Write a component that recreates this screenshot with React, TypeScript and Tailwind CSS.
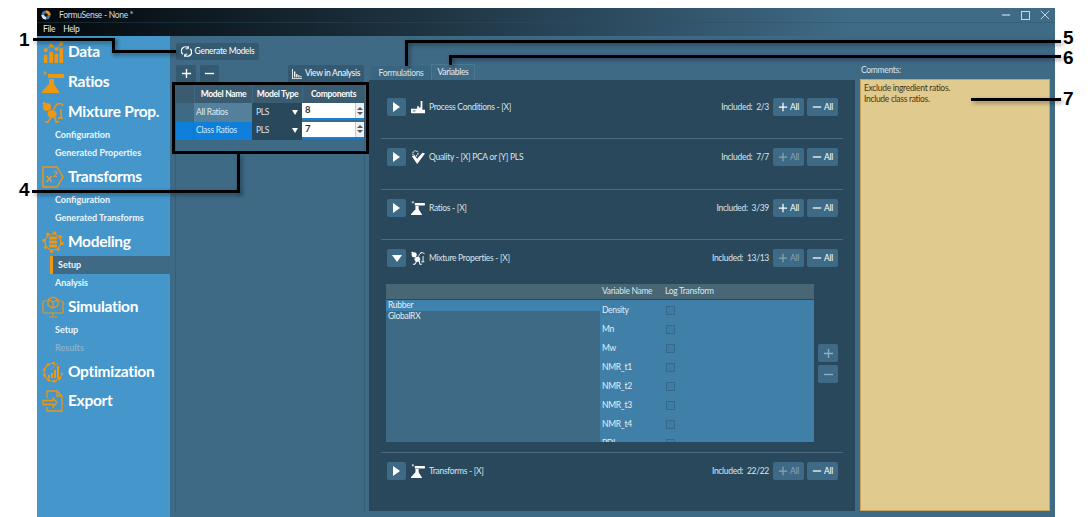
import React from "react";

type IconProps = { className?: string };

const DataIcon = ({ className }: IconProps) => (
  <svg viewBox="0 0 22 24" className={className} fill="currentColor">
    <rect x="1" y="15" width="4" height="9" />
    <rect x="7" y="12" width="4" height="12" />
    <rect x="12.5" y="14" width="4" height="10" />
    <rect x="18" y="8" width="4" height="16" />
    <circle cx="3" cy="10" r="2" />
    <circle cx="9" cy="5" r="2" />
    <circle cx="15" cy="9" r="2" />
    <circle cx="20" cy="3" r="2" />
    <path d="M3 10 9 5l6 4 5-6" fill="none" stroke="currentColor" strokeWidth="1" />
  </svg>
);

const FlaskIcon = ({ className }: IconProps) => (
  <svg viewBox="0 0 22 22" className={className} fill="currentColor">
    <path d="M6 3h15a1 1 0 0 1 1 1v2a1 1 0 0 1-1 1H6z" />
    <path d="M3 0v4M1 2h4" stroke="currentColor" strokeWidth="1" fill="none" />
    <path d="M7 8h5v5l4.5 7a1 1 0 0 1-1 2H1.5a1 1 0 0 1-1-2L7 13z" />
  </svg>
);

const MixtureIcon = ({ className }: IconProps) => (
  <svg viewBox="0 0 22 22" className={className} fill="currentColor">
    <circle cx="5" cy="6" r="4" />
    <circle cx="2" cy="2.5" r="1.5" />
    <ellipse cx="10" cy="13" rx="4.5" ry="4" />
    <path d="M9 16l-3 5h-3M13 16l1 5h3" fill="none" stroke="currentColor" strokeWidth="1.6" />
    <path d="M12 9c1-7 8-8 9-4M14 4l3-2M19 8v9M16 17h5" fill="none" stroke="currentColor" strokeWidth="1.4" />
  </svg>
);

const TransformIcon = ({ className }: IconProps) => (
  <svg viewBox="0 0 22 22" className={className}>
    <path d="M1 1h14l6 10-6 10H1z" fill="none" stroke="currentColor" strokeWidth="1.4" />
    <text x="3.5" y="16" fontSize="12" fontWeight="bold" letterSpacing="0" fontFamily="Lato, sans-serif" fill="currentColor">x</text>
    <text x="10.5" y="10.5" fontSize="8" fontWeight="bold" letterSpacing="0" fontFamily="Lato, sans-serif" fill="currentColor">2</text>
  </svg>
);

const ModelingIcon = ({ className }: IconProps) => (
  <svg viewBox="0 0 22 22" className={className} fill="currentColor">
    <circle cx="11" cy="11" r="8" fill="none" stroke="currentColor" strokeWidth="1.2" />
    <circle cx="11" cy="11" r="9.5" fill="none" stroke="currentColor" strokeWidth="2.4" strokeDasharray="3 4.45" />
    <rect x="7" y="5.5" width="8" height="3" rx="1" />
    <rect x="7" y="9.5" width="8" height="3" rx="1" />
    <rect x="7" y="13.5" width="8" height="3" rx="1" />
  </svg>
);

const SimulationIcon = ({ className }: IconProps) => (
  <svg viewBox="0 0 22 22" className={className} fill="none" stroke="currentColor" strokeWidth="1.2">
    <path d="M5 5H2a1 1 0 0 0-1 1v10a1 1 0 0 0 1 1h18a1 1 0 0 0 1-1V6a1 1 0 0 0-1-1h-3" />
    <path d="M11 17v3M7 21h8" />
    <path d="M11 1l5 2.5v6L11 12l-5-2.5v-6zM6 3.5 11 6l5-2.5M11 6v6" />
  </svg>
);

const OptimizationIcon = ({ className }: IconProps) => (
  <svg viewBox="0 0 22 22" className={className} fill="currentColor">
    <path d="M13 2.5A9 9 0 1 0 20 12" fill="none" stroke="currentColor" strokeWidth="1.1" />
    <path d="M13 2.5A9 9 0 1 0 20 12" fill="none" stroke="currentColor" strokeWidth="2.6" strokeDasharray="2.5 3.5" />
    <rect x="6" y="14" width="2" height="3" />
    <rect x="9" y="12" width="2" height="5" />
    <rect x="12" y="9" width="2" height="8" />
    <rect x="15" y="5" width="2" height="12" />
    <path d="M8 9l8-7" fill="none" stroke="currentColor" strokeWidth="0.8" />
  </svg>
);

const ExportIcon = ({ className }: IconProps) => (
  <svg viewBox="0 0 22 22" className={className} fill="none" stroke="currentColor" strokeWidth="1.3">
    <path d="M5 8V1h10l5 5v15H5v-4" />
    <path d="M15 1v5h5" />
    <path d="M1 10.5h10V8l4 4.5-4 4.5v-2.5H1z" />
  </svg>
);

const FactoryIcon = ({ className }: IconProps) => (
  <svg viewBox="0 0 16 16" className={className} fill="currentColor">
    <path d="M11 1h2v10h3v4H1a1 1 0 0 1-1-1v-4h7V7h2v2l2-1z" />
    <rect x="2" y="12" width="3" height="1" fill="#2a485c" />
  </svg>
);

const QualityIcon = ({ className }: IconProps) => (
  <svg viewBox="0 0 16 16" className={className} fill="currentColor">
    <circle cx="5" cy="4" r="3" fill="none" stroke="currentColor" strokeWidth="1.2" strokeDasharray="1.5 1" />
    <path d="M1 7l3-1 3 4 6-7 3 1-9 12z" />
  </svg>
);

const PlusGlyph = ({ className }: IconProps) => (
  <svg viewBox="0 0 12 12" className={className} fill="none" stroke="currentColor" strokeWidth="1.5">
    <path d="M6 1v10M1 6h10" />
  </svg>
);

const MinusGlyph = ({ className }: IconProps) => (
  <svg viewBox="0 0 12 12" className={className} fill="none" stroke="currentColor" strokeWidth="1.5">
    <path d="M1 6h10" />
  </svg>
);

const NavHead = ({ label, icon, h }: { label: string; icon: React.ReactNode; h: string }) => (
  <div className={`flex items-center pl-[5px] text-white ${h}`}>
    <span className="w-[22px] h-[22px] shrink-0 text-[#f0960f]">{icon}</span>
    <span className="ml-[4px] text-[15.5px] tracking-[-0.3px] font-bold leading-none">{label}</span>
  </div>
);

const NavSub = ({ label, muted }: { label: string; muted?: boolean }) => (
  <div className={`h-[18px] flex items-center pl-[18px] text-[9px] tracking-normal font-bold ${muted ? "text-[#8fb0c6]" : "text-[#eef6fb]"}`}>
    {label}
  </div>
);

const Sidebar = () => (
  <aside className="w-[133px] shrink-0 bg-[#4496cb] pt-px">
    <NavHead label="Data" h="h-[30px]" icon={<DataIcon className="w-full h-full" />} />
    <NavHead label="Ratios" h="h-[30px]" icon={<FlaskIcon className="w-full h-full" />} />
    <NavHead label="Mixture Prop." h="h-[29px]" icon={<MixtureIcon className="w-full h-full" />} />
    <NavSub label="Configuration" />
    <NavSub label="Generated Properties" />
    <NavHead label="Transforms" h="h-[29px]" icon={<TransformIcon className="w-full h-full" />} />
    <NavSub label="Configuration" />
    <NavSub label="Generated Transforms" />
    <NavHead label="Modeling" h="h-[29px]" icon={<ModelingIcon className="w-full h-full" />} />
    <div className="h-[18px] flex items-center bg-[#3e6a86] ml-[13px]">
      <span className="w-[3px] h-full bg-[#f0960f]" />
      <span className="ml-[5px] text-[9px] tracking-normal font-bold text-[#eef6fb]">Setup</span>
    </div>
    <NavSub label="Analysis" />
    <NavHead label="Simulation" h="h-[29px]" icon={<SimulationIcon className="w-full h-full" />} />
    <NavSub label="Setup" />
    <NavSub label="Results" muted />
    <NavHead label="Optimization" h="h-[29px]" icon={<OptimizationIcon className="w-full h-full" />} />
    <NavHead label="Export" h="h-[30px]" icon={<ExportIcon className="w-full h-full" />} />
  </aside>
);

const NumberField = ({ value }: { value: string }) => (
  <div className="flex-1 h-[17px] bg-white flex items-center border-b-2 border-[#1a7fd0]">
    <span className="flex-1 pl-[3px] text-[9.5px] font-bold text-[#333]">{value}</span>
    <span className="w-[9px] h-full bg-[#eef1f3] border-l border-[#c4ccd2] flex flex-col items-center justify-center gap-[2px]">
      <span className="w-0 h-0 border-x-[3px] border-x-transparent border-b-[3px] border-b-[#555]" />
      <span className="w-0 h-0 border-x-[3px] border-x-transparent border-t-[3px] border-t-[#555]" />
    </span>
  </div>
);

const ModelRow = ({ name, value, selected }: { name: string; value: string; selected?: boolean }) => (
  <div className="h-[18.5px] flex items-stretch">
    <div className={`w-[18px] border-r border-[#3e6a86] ${selected ? "bg-[#0f7fdc]" : "bg-[#3e6a86]"}`} />
    <div className={`w-[58px] flex items-center pl-[2px] ${selected ? "bg-[#0f7fdc] text-[#cfe9fb]" : "bg-[#54809b] text-[#e2edf3]"}`}>
      {name}
    </div>
    <div className="w-[50px] bg-[#2a485c] flex items-center justify-between px-[4px] text-[#d9e5ec]">
      PLS
      <span className="w-0 h-0 border-x-[3.5px] border-x-transparent border-t-[5px] border-t-white" />
    </div>
    <NumberField value={value} />
  </div>
);

const HeadCell = ({ label, w }: { label: string; w: string }) => (
  <div className={`${w} flex items-center justify-center border-l border-[#3e6a86] font-bold text-white`}>{label}</div>
);

const ActionButton = ({ children, className }: { children: React.ReactNode; className: string }) => (
  <button className={`h-[17px] rounded-[2px] bg-[#345a72] flex items-center justify-center text-white ${className}`}>{children}</button>
);

const ModelsPanel = () => (
  <section className="w-[199px] shrink-0 pl-[5px] pt-[7px] flex flex-col">
    <ActionButton className="w-[83px] ml-px text-[#e2edf3] gap-[3px]">
      <svg viewBox="0 0 12 12" className="w-[11px] h-[11px]" fill="none" stroke="currentColor" strokeWidth="1.5">
        <path d="M2 9A4.5 4.5 0 0 1 8 2M10 3a4.5 4.5 0 0 1-6 7" />
        <path d="M8 0v3h-3M4 12V9h3" strokeWidth="1" />
      </svg>
      Generate Models
    </ActionButton>
    <div className="flex items-center mt-[5px] pl-px w-[189px]">
      <ActionButton className="w-[20px]"><PlusGlyph className="w-[11px] h-[11px]" /></ActionButton>
      <ActionButton className="w-[19px] ml-[4px]"><MinusGlyph className="w-[11px] h-[11px]" /></ActionButton>
      <ActionButton className="w-[76px] ml-auto text-[#e2edf3] gap-[3px]">
        <svg viewBox="0 0 12 12" className="w-[10px] h-[10px]" fill="currentColor">
          <path d="M0 0h1v11h11v1H0z" />
          <rect x="2.5" y="3" width="1.5" height="7" />
          <rect x="5" y="6" width="1.5" height="4" />
          <rect x="7.5" y="7.5" width="1.5" height="2.5" />
          <rect x="10" y="8.5" width="1.5" height="1.5" />
        </svg>
        View in Analysis
      </ActionButton>
    </div>
    <div className="flex-1 mt-[3px] mb-[4px] w-[190px] border-x border-[#375f78] flex flex-col">
      <div className="h-[18px] flex bg-[#3b5c70]">
        <div className="w-[18px]" />
        <HeadCell label="Model Name" w="w-[58px]" />
        <HeadCell label="Model Type" w="w-[50px]" />
        <HeadCell label="Components" w="flex-1" />
      </div>
      <ModelRow name="All Ratios" value="8" />
      <ModelRow name="Class Ratios" value="7" selected />
    </div>
  </section>
);

const RowHead = ({
  icon,
  title,
  count,
  open,
  plusDisabled,
  className,
}: {
  icon: React.ReactNode;
  title: string;
  count: string;
  open?: boolean;
  plusDisabled?: boolean;
  className?: string;
}) => (
  <div className={`flex items-center h-[18px] pl-[18px] pr-[17px] ${className ?? ""}`}>
    <button className="w-[19px] h-[18px] rounded-[2px] bg-[#3e6a86] flex items-center justify-center">
      {open ? (
        <span className="w-0 h-0 border-x-[5.5px] border-x-transparent border-t-[7px] border-t-white" />
      ) : (
        <span className="w-0 h-0 border-y-[5px] border-y-transparent border-l-[7px] border-l-white" />
      )}
    </button>
    <span className="ml-[5px] w-[14px] h-[14px] text-white">{icon}</span>
    <span className="ml-[4px] text-[#d9e5ec]">{title}</span>
    <span className="ml-auto text-[#d9e5ec] whitespace-pre">{`Included:  ${count}`}</span>
    <button className={`ml-[4px] w-[31px] h-[18px] rounded-[2px] bg-[#3e6a86] flex items-center justify-center gap-[2px] ${plusDisabled ? "text-[#8aa3b3]" : "text-white"}`}>
      <PlusGlyph className="w-[10px] h-[10px]" />All
    </button>
    <button className="ml-[3px] w-[31px] h-[18px] rounded-[2px] bg-[#3e6a86] flex items-center justify-center gap-[2px] text-white">
      <MinusGlyph className="w-[10px] h-[10px]" />All
    </button>
  </div>
);

const Divider = ({ className }: { className: string }) => <div className={`mx-[12px] h-px bg-[#4d6b80] ${className}`} />;

const vars = ["Density", "Mn", "Mw", "NMR_t1", "NMR_t2", "NMR_t3", "NMR_t4", "PDI"];

const VariableTable = () => (
  <div className="mt-[17px] ml-[17px] flex">
    <div className="w-[428px] h-[158px] flex flex-col overflow-hidden">
      <div className="h-[16px] shrink-0 flex bg-[#486674] border-b border-[#2a485c] text-[#d9e5ec]">
        <div className="w-[214px]" />
        <div className="w-[62px] border-r border-[#3e6a86] pl-[2px] leading-[15px]">Variable Name</div>
        <div className="pl-[3px] leading-[15px]">Log Transform</div>
      </div>
      <div className="flex-1 min-h-0 flex">
        <div className="w-[214px] bg-[#3e6a86] text-[#e2edf3] leading-[11px]">
          <div className="bg-[#3f82ae] pl-[2px]">Rubber</div>
          <div className="pl-[2px]">GlobalRX</div>
        </div>
        <div className="flex-1 bg-[#4080a8] overflow-hidden pt-[1px]">
          {vars.map((v) => (
            <div key={v} className="h-[19px] flex items-center text-[#e2edf3]">
              <span className="w-[62px] pl-[2px]">{v}</span>
              <span className="ml-[4px] w-[9px] h-[9px] border border-[#36688a] bg-[#3f7ca3]" />
            </div>
          ))}
        </div>
      </div>
    </div>
    <div className="ml-[4px] pt-[60px] flex flex-col gap-[3px] text-[#8fadc0]">
      <button className="w-[20px] h-[18px] rounded-[2px] bg-[#3e6a86] flex items-center justify-center"><PlusGlyph className="w-[11px] h-[11px]" /></button>
      <button className="w-[20px] h-[18px] rounded-[2px] bg-[#3e6a86] flex items-center justify-center"><MinusGlyph className="w-[11px] h-[11px]" /></button>
    </div>
  </div>
);

const VariablesPanel = () => (
  <section className="w-[486px] shrink-0 flex flex-col mb-[6px]">
    <div className="h-[44px] shrink-0 flex items-end pl-[2px]">
      <div className="w-[60px] h-[14px] bg-[#3a6580] text-center leading-[14px] text-[#d9e5ec]">Formulations</div>
      <div className="w-[44px] h-[16px] bg-[#3e6a86] border-x border-t border-[#4a7792] text-center leading-[15px] text-[#e6eff5]">Variables</div>
    </div>
    <div className="flex-1 bg-[#2a485c] pt-[18px]">
      <RowHead icon={<FactoryIcon className="w-full h-full" />} title="Process Conditions - [X]" count="2/3" />
      <Divider className="mt-[22px]" />
      <RowHead className="mt-[9px]" plusDisabled icon={<QualityIcon className="w-full h-full" />} title="Quality - [X] PCA or [Y] PLS" count="7/7" />
      <Divider className="mt-[23px]" />
      <RowHead className="mt-[9px]" icon={<FlaskIcon className="w-full h-full" />} title="Ratios - [X]" count="3/39" />
      <Divider className="mt-[22px]" />
      <RowHead className="mt-[9px]" open plusDisabled icon={<MixtureIcon className="w-full h-full" />} title="Mixture Properties - [X]" count="13/13" />
      <VariableTable />
      <Divider className="mt-[10px]" />
      <RowHead className="mt-[9px]" plusDisabled icon={<FlaskIcon className="w-full h-full" />} title="Transforms - [X]" count="22/22" />
    </div>
  </section>
);

const CommentsPanel = () => (
  <section className="ml-[5px] w-[190px] shrink-0 flex flex-col mb-[6px]">
    <div className="h-[43px] shrink-0 flex items-end pb-[2px] pl-px text-[#d9e5ec]">Comments:</div>
    <div className="flex-1 bg-[#e0ca8e] border border-[#c7a55c] px-[3px] pt-[3px] leading-[11px] text-[#4a3413]">
      <div>Exclude ingredient ratios.</div>
      <div>Include class ratios.</div>
    </div>
  </section>
);

const Line = ({ className }: { className: string }) => (
  <div className={`absolute bg-black shadow-[2px_2px_4px_rgba(0,0,0,0.4)] ${className}`} />
);

const Num = ({ children, className }: { children: string; className: string }) => (
  <div className={`absolute font-['Liberation_Sans',sans-serif] font-bold text-[19px] tracking-normal leading-[14px] text-black ${className}`}>{children}</div>
);

export default function App() {
  return (
    <div className="relative w-[1092px] h-[517px] bg-white overflow-hidden whitespace-nowrap pt-[8px] pl-[37px] text-[8.5px] tracking-[-0.3px] font-['Lato','Noto_Sans',sans-serif]">
      <div className="w-[1018px] h-[509px] flex flex-col bg-[#3e6a86]">
        <header className="h-[28px] shrink-0 bg-gradient-to-r from-[#05090d] to-[#3f6b87] to-80% relative">
          <div className="h-[14px] flex items-center pl-[4px] text-[#d5dde2]">
            <svg viewBox="0 0 12 12" className="w-[10px] h-[10px]">
              <circle cx="6" cy="6" r="5.5" fill="#3d7fa8" />
              <path d="M6 .5A5.5 5.5 0 0 1 11.5 6H6z" fill="#f0960f" />
              <path d="M6 11.5A5.5 5.5 0 0 1 .5 6H6z" fill="#dfe6ea" />
              <circle cx="6" cy="6" r="2.2" fill="#111" />
            </svg>
            <span className="ml-[8px]">FormuSense - None *</span>
            <span className="ml-auto mr-[5px] flex items-center gap-[10px] text-[#c7d6df]">
              <MinusGlyph className="w-[10px] h-[10px]" />
              <span className="w-[9px] h-[9px] border border-[#c7d6df]" />
              <svg viewBox="0 0 12 12" className="w-[10px] h-[10px]" fill="none" stroke="currentColor" strokeWidth="1.2">
                <path d="M1 1l10 10M11 1 1 11" />
              </svg>
            </span>
          </div>
          <div className="h-[14px] flex items-center gap-[8px] pl-[6px] text-[#e2e8ec] border-t border-[#2c4d63]/40">
            <span>File</span>
            <span>Help</span>
          </div>
        </header>
        <main className="flex-1 min-h-0 flex">
          <Sidebar />
          <ModelsPanel />
          <VariablesPanel />
          <CommentsPanel />
        </main>
      </div>

      <Num className="left-[19px] top-[33px]">1</Num>
      <Line className="left-[33px] top-[38px] w-[82px] h-[3px]" />
      <Line className="left-[112px] top-[38px] w-[3px] h-[15px]" />
      <Line className="left-[112px] top-[50px] w-[64px] h-[3px]" />

      <div className="absolute left-[172px] top-[82px] w-[197px] h-[72px] border-[3px] border-black" />
      <Line className="left-[237px] top-[154px] w-[3px] h-[39px]" />
      <Line className="left-[32px] top-[190px] w-[208px] h-[3px]" />
      <Num className="left-[19px] top-[183px]">4</Num>

      <Line className="left-[406px] top-[40px] w-[655px] h-[3px]" />
      <Line className="left-[405px] top-[40px] w-[3px] h-[26px]" />
      <Num className="left-[1063px] top-[31px]">5</Num>

      <Line className="left-[449px] top-[55px] w-[612px] h-[3px]" />
      <Line className="left-[449px] top-[55px] w-[3px] h-[10px]" />
      <Num className="left-[1063px] top-[51px]">6</Num>

      <Line className="left-[971px] top-[98px] w-[90px] h-[3px]" />
      <Num className="left-[1063px] top-[92px]">7</Num>
    </div>
  );
}
